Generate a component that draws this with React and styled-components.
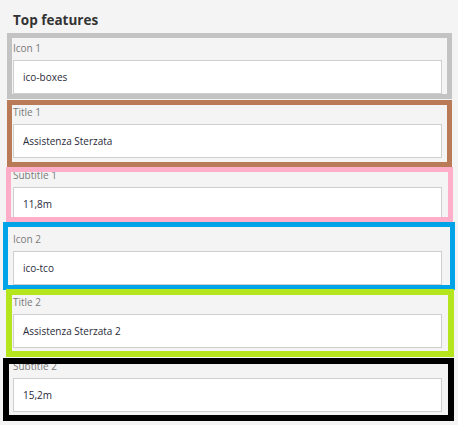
import styled, { createGlobalStyle } from 'styled-components'

const GlobalStyle = createGlobalStyle`
  html, body {
    margin: 0;
    padding: 0;
    background: #f4f4f4;
  }
  body {
    font-family: "Open Sans", "Liberation Sans", sans-serif;
  }
`

const fields = [
  { label: 'Icon 1', value: 'ico-boxes', frame: { color: '#c3c3c3', w: 5, top: -7, left: -6, right: -10, height: 66 } },
  { label: 'Title 1', value: 'Assistenza Sterzata', frame: { color: '#b97a57', w: 5, top: -4, left: -6, right: -10, height: 67 } },
  { label: 'Subtitle 1', value: '11,8m', frame: { color: '#ffaec9', w: 5, top: 0, left: -7, right: -11, height: 55 } },
  { label: 'Icon 2', value: 'ico-tco', frame: { color: '#00a2e8', w: 5, top: -9, left: -10, right: -13, height: 68 } },
  { label: 'Title 2', value: 'Assistenza Sterzata 2', frame: { color: '#b5e61d', w: 6, top: -5, left: -7, right: -12, height: 68 } },
  { label: 'Subtitle 2', value: '15,2m', frame: { color: '#000000', w: 6, top: 0, left: -10, right: -12, height: 63 } },
]

const Panel = styled.div`
  width: 458px;
  height: 425px;
  padding: 9px 16px 0 13px;
  box-sizing: border-box;
  overflow: hidden;
`

const Heading = styled.h3`
  margin: 0 0 8px;
  font-size: 13.5px;
  font-weight: 700;
  line-height: 23px;
  color: #333;
`

const FieldList = styled.div`
  display: flex;
  flex-direction: column;
  gap: 9.6px;
`

const Field = styled.div`
  position: relative;
  display: flex;
  flex-direction: column;
  gap: 4px;

  &::after {
    content: '';
    position: absolute;
    top: ${p => p.$frame.top}px;
    left: ${p => p.$frame.left}px;
    right: ${p => p.$frame.right}px;
    height: ${p => p.$frame.height}px;
    border: ${p => p.$frame.w}px solid ${p => p.$frame.color};
    box-sizing: border-box;
    pointer-events: none;
  }
`

const Label = styled.label`
  font-size: 10px;
  line-height: 16px;
  color: #7a7a7a;
`

const Input = styled.input`
  height: 34px;
  box-sizing: border-box;
  border: 1px solid #cfcfcf;
  background: #fff;
  padding: 0 9px;
  font-family: inherit;
  font-size: 10px;
  color: #2a2a3a;
  outline: none;
`

export default function App() {
  return (
    <>
      <GlobalStyle />
      <Panel>
        <Heading>Top features</Heading>
        <FieldList>
          {fields.map(f => (
            <Field key={f.label} $frame={f.frame}>
              <Label>{f.label}</Label>
              <Input defaultValue={f.value} readOnly />
            </Field>
          ))}
        </FieldList>
      </Panel>
    </>
  )
}
